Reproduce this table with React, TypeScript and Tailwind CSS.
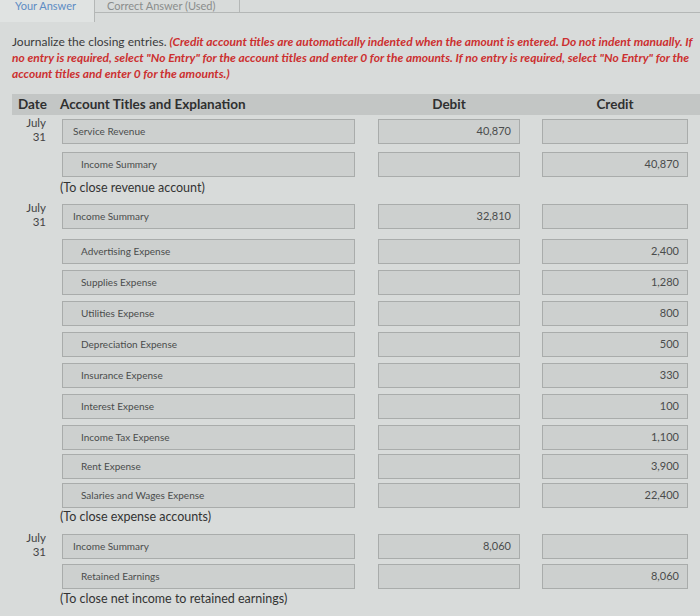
import React from "react";

type Row = {
  date?: boolean;
  account: string;
  indent?: boolean;
  debit?: string;
  credit?: string;
  mt: string;
};

const font = { fontFamily: "Lato, 'Open Sans', sans-serif" };

function Box({ text, align, indent }: { text?: string; align: "left" | "right"; indent?: boolean }) {
  return (
    <div
      className={`h-[25px] border border-[#a9acab] bg-[#cdd0cf] flex items-center text-[#4a4c4c] ${
        align === "right" ? "justify-end pr-[8px] text-[11px]" : indent ? "pl-[18px] text-[10px]" : "pl-[10px] text-[10px]"
      }`}
    >
      {text}
    </div>
  );
}

function EntryRow({ r }: { r: Row }) {
  return (
    <div className={`flex ${r.mt}`}>
      <div className="w-[50px] h-[25px] flex flex-col items-end justify-center pr-[16px] text-[11.5px] leading-[14px] text-[#444]">
        {r.date && (
          <>
            <span className="-mt-[4px]">July</span>
            <span>31</span>
          </>
        )}
      </div>
      <div className="w-[293px]">
        <Box text={r.account} align="left" indent={r.indent} />
      </div>
      <div className="w-[142px] ml-[23px]">
        <Box text={r.debit} align="right" />
      </div>
      <div className="w-[146px] ml-[22px]">
        <Box text={r.credit} align="right" />
      </div>
    </div>
  );
}

function Explain({ text, h }: { text: string; h: string }) {
  return (
    <div className={`flex items-center ${h} pl-[48px] text-[12.5px] text-[#333]`}>{text}</div>
  );
}

export default function App() {
  const g1: Row[] = [
    { date: true, account: "Service Revenue", debit: "40,870", mt: "mt-[4px]" },
    { account: "Income Summary", indent: true, credit: "40,870", mt: "mt-[8px]" },
  ];
  const g2: Row[] = [
    { date: true, account: "Income Summary", debit: "32,810", mt: "mt-[5px]" },
    { account: "Advertising Expense", indent: true, credit: "2,400", mt: "mt-[10px]" },
    { account: "Supplies Expense", indent: true, credit: "1,280", mt: "mt-[6px]" },
    { account: "Utilities Expense", indent: true, credit: "800", mt: "mt-[6px]" },
    { account: "Depreciation Expense", indent: true, credit: "500", mt: "mt-[6px]" },
    { account: "Insurance Expense", indent: true, credit: "330", mt: "mt-[6px]" },
    { account: "Interest Expense", indent: true, credit: "100", mt: "mt-[6px]" },
    { account: "Income Tax Expense", indent: true, credit: "1,100", mt: "mt-[6px]" },
    { account: "Rent Expense", indent: true, credit: "3,900", mt: "mt-[4px]" },
    { account: "Salaries and Wages Expense", indent: true, credit: "22,400", mt: "mt-[4px]" },
  ];
  const g3: Row[] = [
    { date: true, account: "Income Summary", debit: "8,060", mt: "mt-[8px]" },
    { account: "Retained Earnings", indent: true, credit: "8,060", mt: "mt-[5px]" },
  ];

  return (
    <div className="w-[700px] h-[616px] overflow-hidden bg-[#d8dbda]" style={font}>
      {/* Tabs */}
      <div className="flex h-[22px]">
        <div className="w-[95px] h-[22px] bg-[#e0e3e2] border-r border-[#b4b7b6] flex items-start pl-[15px] text-[11px] leading-[12px] text-[#5d8cc4]">
          Your Answer
        </div>
        <div className="w-[145px] h-[13px] border-b border-r border-[#b4b7b6] pl-[12px] text-[11px] leading-[11px] text-[#8a8d8c]">
          Correct Answer (Used)
        </div>
        <div className="flex-1 h-[13px] border-b border-[#b4b7b6]"></div>
      </div>

      {/* Instructions */}
      <div className="pl-[12px] pt-[12px] text-[12px] leading-[16px] whitespace-nowrap">
        <div>
          <span className="text-[#3a3a3a]">Journalize the closing entries. </span>
          <span className="text-[#cc3030] font-bold italic">
            (Credit account titles are automatically indented when the amount is entered. Do not indent manually. If
          </span>
        </div>
        <div className="text-[#cc3030] font-bold italic">
          no entry is required, select "No Entry" for the account titles and enter 0 for the amounts. If no entry is required, select "No Entry" for the
        </div>
        <div className="text-[#cc3030] font-bold italic">account titles and enter 0 for the amounts.)</div>
      </div>

      {/* Table */}
      <div className="ml-[12px] mt-[12px]">
        <div className="flex h-[21px] items-center bg-[#c3c6c5] text-[13.5px] font-bold text-[#2f3030]">
          <div className="w-[50px] pl-[6px]">Date</div>
          <div className="w-[293px] -ml-[2px]">Account Titles and Explanation</div>
          <div className="w-[142px] ml-[25px] text-center">Debit</div>
          <div className="w-[146px] ml-[22px] text-center">Credit</div>
        </div>

        {g1.map((r, i) => (
          <EntryRow key={"a" + i} r={r} />
        ))}
        <Explain text="(To close revenue account)" h="h-[22px]" />
        {g2.map((r, i) => (
          <EntryRow key={"b" + i} r={r} />
        ))}
        <Explain text="(To close expense accounts)" h="h-[18px]" />
        {g3.map((r, i) => (
          <EntryRow key={"c" + i} r={r} />
        ))}
        <Explain text="(To close net income to retained earnings)" h="h-[20px]" />
      </div>
    </div>
  );
}
